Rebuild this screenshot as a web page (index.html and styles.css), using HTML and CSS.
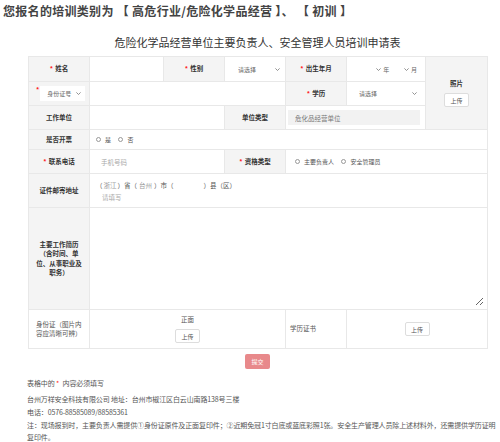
FILE: index.html
```html
<!DOCTYPE html>
<html lang="zh-CN">
<head>
  <meta charset="UTF-8" />
  <meta name="viewport" content="width=device-width, initial-scale=1.0"/>
  <title>危险化学品经营单位培训申请表</title>
  <link rel="stylesheet" href="styles.css">
</head>
<body>
  <h2 class="leibie">您报名的培训类别为 【 高危行业/危险化学品经营 】、 【 初训 】</h2>

  <div class="main">
    <h3 class="biaoti">危险化学品经营单位主要负责人、安全管理人员培训申请表</h3>

    <form id="form">
      <table class="biao">
        <colgroup>
          <col class="w61"><col class="w74"><col class="w61"><col class="w61"><col class="w61"><col class="w79"><col class="w62">
        </colgroup>
        <tr class="h25">
          <th><i class="req">*</i>姓名</th>
          <td><input type="text" id="xingming"></td>
          <th><i class="req">*</i>性别</th>
          <td class="xuan">
            <span class="sel">
              <select id="xingbie"><option value="">请选择</option><option>男</option><option>女</option></select>
              <svg class="jian" width="5" height="3" viewBox="0 0 5 3"><path d="M.4.4 2.5 2.5 4.6.4" fill="none" stroke="#777" stroke-width=".8"/></svg>
            </span>
          </td>
          <th><i class="req">*</i>出生年月</th>
          <td>
            <div class="nianyue">
              <span class="sel nian">
                <select id="nian"><option value=""></option></select>
                <svg class="jian" width="5" height="3" viewBox="0 0 5 3"><path d="M.4.4 2.5 2.5 4.6.4" fill="none" stroke="#777" stroke-width=".8"/></svg>
              </span>
              <span class="dw">年</span>
              <span class="sel yue">
                <select id="yue"><option value=""></option></select>
                <svg class="jian" width="5" height="3" viewBox="0 0 5 3"><path d="M.4.4 2.5 2.5 4.6.4" fill="none" stroke="#777" stroke-width=".8"/></svg>
              </span>
              <span class="dw">月</span>
            </div>
          </td>
          <th rowspan="3" class="zhaopian">照片<br><button type="button" class="shangchuan">上传</button></th>
        </tr>
        <tr class="h24">
          <th class="zhengjian">
            <div class="zj">
              <i class="req">*</i>
              <span class="sel baise">
                <select id="zjlx"><option>身份证号</option><option>护照</option></select>
                <svg class="jian" width="5" height="3" viewBox="0 0 5 3"><path d="M.4.4 2.5 2.5 4.6.4" fill="none" stroke="#777" stroke-width=".8"/></svg>
              </span>
            </div>
          </th>
          <td colspan="3"><input type="text" id="haoma"></td>
          <th><i class="req">*</i>学历</th>
          <td class="xuan xl">
            <span class="sel">
              <select id="xueli"><option value="">请选择</option><option>高中</option><option>大专</option><option>本科</option></select>
              <svg class="jian" width="5" height="3" viewBox="0 0 5 3"><path d="M.4.4 2.5 2.5 4.6.4" fill="none" stroke="#777" stroke-width=".8"/></svg>
            </span>
          </td>
        </tr>
        <tr class="h24">
          <th>工作单位</th>
          <td colspan="2"><input type="text" id="danwei"></td>
          <th>单位类型</th>
          <td colspan="2" class="leixing"><input type="text" value="危化品经营单位" readonly></td>
        </tr>
        <tr class="h20">
          <th>是否开票</th>
          <td colspan="6" class="danxuan">
            <label><input type="radio" name="kaipiao" value="1">是</label>
            <label><input type="radio" name="kaipiao" value="0">否</label>
          </td>
        </tr>
        <tr class="h24">
          <th><i class="req">*</i>联系电话</th>
          <td colspan="2"><input type="text" id="dianhua" placeholder="手机号码"></td>
          <th><i class="req">*</i>资格类型</th>
          <td colspan="3" class="danxuan zige">
            <label><input type="radio" name="zige" value="1">主要负责人</label>
            <label><input type="radio" name="zige" value="2">安全管理员</label>
          </td>
        </tr>
        <tr class="h34">
          <th>证件邮寄地址</th>
          <td colspan="6" class="dizhi">
            <div class="sheng">（<input type="text" class="d1" value="浙江">）省（<input type="text" class="d2" value="台州">）市（<input type="text" class="d3">）县（区）</div>
            <input type="text" class="xiangxi" placeholder="请填写">
          </td>
        </tr>
        <tr class="h102">
          <th>主要工作简历（含时间、单位、从事职业及职务）</th>
          <td colspan="6" class="jianli"><textarea id="jianli"></textarea></td>
        </tr>
        <tr class="h39">
          <td class="shuoming">身份证（图片内容应清晰可辨）</td>
          <td colspan="3" class="zhong">
            <p>正面</p>
            <button type="button" class="shangchuan">上传</button>
          </td>
          <td class="shuoming xlzs">学历证书</td>
          <td colspan="2" class="zhong"><button type="button" class="shangchuan">上传</button></td>
        </tr>
      </table>

      <div class="tijiao"><button type="submit">提交</button></div>
    </form>

    <div class="beizhu">
      <p class="bitian">表格中的 <i class="req">*</i> 内容必须填写</p>
      <p>台州万祥安全科技有限公司 地址：台州市椒江区白云山南路138号三楼</p>
      <p>电话：0576-88585089/88585361</p>
      <p>注：现场报到时，主要负责人需提供①身份证原件及正面复印件；②近期免冠1寸白底或蓝底彩照1张。安全生产管理人员除上述材料外，还需提供学历证明复印件。</p>
    </div>
  </div>
</body>
</html>
```

FILE: styles.css
```css
body {
  margin: 0;
  font-family: "Noto Sans CJK SC", "Noto Sans", sans-serif;
  color: #333;
  background: #fff;
  overflow: hidden;
}
.leibie {
  margin: 0;
  padding-left: 3px;
  font-size: 12px;
  line-height: 22px;
  letter-spacing: 0.3px;
  color: #444;
}
.main {
  padding-left: 28px;
}
.biaoti {
  width: 459px;
  margin: 12px 0 6px;
  font-size: 11px;
  line-height: 16px;
  font-weight: normal;
  text-align: center;
  color: #333;
}
.req {
  font-style: normal;
  color: #f22;
  margin-right: 2px;
}

/* 表格 */
.biao {
  width: 459px;
  table-layout: fixed;
  border-collapse: collapse;
  font-size: 6.5px;
}
.w61 { width: 61px; }
.w62 { width: 62px; }
.w74 { width: 74px; }
.w79 { width: 79px; }
.h20 { height: 20px; }
.h24 { height: 24px; }
.h25 { height: 25px; }
.h34 { height: 34px; }
.h39 { height: 39px; }
.h102 { height: 102px; }
.biao th, .biao td {
  border: 1px solid #e8e8e8;
  padding: 0 5px;
  vertical-align: middle;
}
.biao th {
  background: #f4f4f4;
  font-weight: bold;
  text-align: center;
  line-height: 9.5px;
  color: #333;
}
.biao input[type=text] {
  display: block;
  width: 100%;
  height: 12px;
  box-sizing: border-box;
  border: none;
  outline: none;
  padding: 0 6px;
  font: inherit;
  font-size: 6.5px;
  color: #555;
  background: transparent;
}
.biao input::placeholder {
  color: #aaa;
}

/* 下拉 */
.sel {
  position: relative;
  display: block;
}
.sel select {
  -webkit-appearance: none;
  appearance: none;
  display: block;
  width: 100%;
  height: 12px;
  border: none;
  outline: none;
  padding: 0;
  background: transparent;
  font: inherit;
  font-size: 6px;
  font-weight: normal;
  color: #666;
}
.sel .jian {
  position: absolute;
  right: 0;
  top: 50%;
  margin-top: -1.5px;
  pointer-events: none;
}
.xuan {
  padding: 0 5px 0 13px !important;
}
.xl {
  padding: 0 8px 0 12px !important;
}
.nianyue {
  display: flex;
  justify-content: flex-end;
  align-items: center;
  padding-right: 3px;
  font-size: 6px;
  color: #666;
}
.nianyue .nian { width: 33px; }
.nianyue .yue { width: 20px; margin-left: 2px; }
.nianyue .dw { margin-left: 2px; }
.zhengjian {
  padding: 0 4px 0 7px !important;
}
.zj {
  display: flex;
  align-items: flex-start;
}
.zj .req {
  line-height: 6px;
  margin-right: 1px;
}
.sel.baise {
  width: 46px;
}
.baise select {
  height: 15px;
  padding: 0 10px 0 7px;
  background: #fff;
}
.baise .jian {
  right: 4px;
}

.leixing {
  padding: 0 5px 0 2px !important;
}
.biao .leixing input {
  height: 15px;
  padding: 0 7px;
  background: #f2f2f2;
  color: #777;
}

/* 单选 */
.danxuan {
  padding-left: 6px !important;
  font-size: 6px;
  color: #555;
}
.danxuan.zige {
  padding-left: 9px !important;
}
.danxuan label {
  display: inline-flex;
  align-items: center;
  margin-right: 6px;
}
.danxuan input {
  -webkit-appearance: none;
  appearance: none;
  width: 5px;
  height: 5px;
  margin: 0 4px 0 0;
  border: 1px solid #999;
  border-radius: 50%;
}

.dizhi {
  padding: 0 5px 0 6px !important;
  color: #555;
}
.sheng {
  line-height: 12px;
  white-space: nowrap;
}
.biao .sheng input {
  display: inline-block;
  vertical-align: top;
  padding: 0;
  text-align: center;
  color: #999;
}
.biao .sheng .d1 { width: 15px; }
.biao .sheng .d2 { width: 17px; }
.biao .sheng .d3 { width: 30px; }
.biao .xiangxi {
  padding-left: 5px;
}

.jianli {
  padding: 3px !important;
}
.jianli textarea {
  display: block;
  width: 100%;
  height: 94px;
  box-sizing: border-box;
  border: none;
  outline: none;
  resize: vertical;
  font: inherit;
}

.shuoming {
  text-align: left;
  padding: 0 5px 0 7px !important;
  line-height: 9.5px;
  color: #555;
}
.shuoming.xlzs {
  padding-left: 4px !important;
}
.zhong {
  text-align: center;
}
.zhong p {
  margin: 0 0 5px;
  line-height: 9px;
  color: #555;
}
.shangchuan {
  width: 25px;
  height: 14px;
  padding: 0;
  border: 1px solid #ddd;
  border-radius: 2px;
  background: #fff;
  font: inherit;
  font-size: 6px;
  font-weight: normal;
  color: #555;
  cursor: pointer;
}
.zhaopian .shangchuan {
  margin-top: 5px;
}

.tijiao {
  display: flex;
  justify-content: center;
  width: 459px;
  margin-top: 5px;
}
.tijiao button {
  width: 25px;
  height: 15px;
  padding: 0;
  border: none;
  border-radius: 2px;
  background: #e8898b;
  color: #fff;
  font: inherit;
  font-size: 6px;
  cursor: pointer;
}

.beizhu {
  width: 472px;
  margin: 8px 0 0 -1px;
  font-size: 7px;
  line-height: 12.5px;
  letter-spacing: -0.12px;
  color: #555;
}
.beizhu p {
  margin: 0 0 0.5px;
}
.beizhu .bitian {
  margin-bottom: 3px;
}
```
